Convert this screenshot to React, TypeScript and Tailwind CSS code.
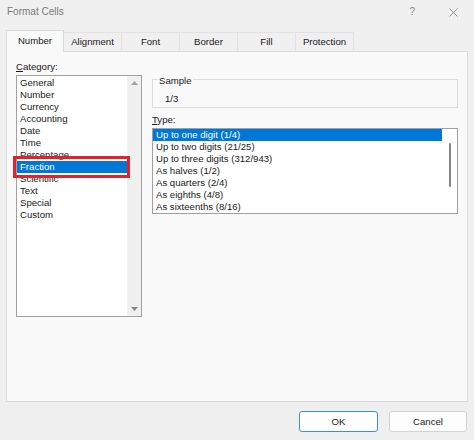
import React from "react";

const categories = [
  "General",
  "Number",
  "Currency",
  "Accounting",
  "Date",
  "Time",
  "Percentage",
  "Fraction",
  "Scientific",
  "Text",
  "Special",
  "Custom",
];

const types = [
  "Up to one digit (1/4)",
  "Up to two digits (21/25)",
  "Up to three digits (312/943)",
  "As halves (1/2)",
  "As quarters (2/4)",
  "As eighths (4/8)",
  "As sixteenths (8/16)",
];

const tabs = ["Number", "Alignment", "Font", "Border", "Fill", "Protection"];

export default function App() {
  return (
    <div
      className="w-[474px] h-[440px] bg-[#f0f0f0] flex flex-col text-[9.6px] leading-[12px] text-[#1a1a1a] overflow-hidden"
      style={{ fontFamily: '"Liberation Sans", Arial, sans-serif' }}
    >
      {/* Title bar */}
      <div className="h-[24px] flex items-center pl-[7px] pr-[16px]">
        <span className="text-[10px] text-[#7a7a7a]">Format Cells</span>
        <span className="ml-auto text-[10px] text-[#8a8a8a] mr-[34px]">?</span>
        <svg width="9" height="9" viewBox="0 0 9 9" className="mt-[1px]">
          <path d="M0.5 0.5 L8.5 8.5 M8.5 0.5 L0.5 8.5" stroke="#8a8a8a" strokeWidth="0.9" fill="none" />
        </svg>
      </div>

      {/* Tabs */}
      <div className="h-[27px] flex items-end px-[6px]">
        {tabs.map((t, i) =>
          i === 0 ? (
            <div
              key={t}
              className="relative z-10 -mb-px w-[58px] h-[22px] flex items-center justify-center bg-[#f9f9f9] border border-b-0 border-[#dadada] pb-[1px]"
            >
              {t}
            </div>
          ) : (
            <div
              key={t}
              className="w-[58px] h-[19px] flex items-center justify-center bg-[#f0f0f0] border-t border-r border-[#e2e2e2] text-[#1a1a1a]"
            >
              {t}
            </div>
          )
        )}
      </div>

      {/* Panel */}
      <div className="mx-[6px] h-[351px] bg-[#f9f9f9] border border-[#dadada] flex gap-[10px] pl-[9px] pt-[7px]">
        {/* Left column */}
        <div className="w-[126px] flex flex-col">
          <div className="h-[16px] flex items-center">
            <span>
              <span className="underline">C</span>ategory:
            </span>
          </div>
          <div className="relative h-[242px] bg-white border border-[#a0a0a0] flex">
            <div className="flex-1 flex flex-col pt-[1px]">
              {categories.map((c) =>
                c === "Fraction" ? (
                  <div key={c} className="h-[12px] pl-[3px] bg-[#0078d7] text-white flex items-center">
                    {c}
                  </div>
                ) : (
                  <div key={c} className="h-[12px] pl-[3px] flex items-center">
                    {c}
                  </div>
                )
              )}
            </div>
            <div className="w-[14px] bg-[#f0f0f0] flex flex-col items-center justify-between py-[5px]">
              <svg width="7" height="4" viewBox="0 0 7 4">
                <path d="M0 4 L3.5 0 L7 4 Z" fill="#a3a3a3" />
              </svg>
              <svg width="7" height="4" viewBox="0 0 7 4">
                <path d="M0 0 L7 0 L3.5 4 Z" fill="#8a8a8a" />
              </svg>
            </div>
            {/* Red highlight box */}
            <div className="absolute left-[-4px] top-[80px] w-[117px] h-[22px] border-[3px] border-[#e3202b]" />
          </div>
        </div>

        {/* Right column */}
        <div className="w-[306px] flex flex-col">
          <div className="relative mt-[20px] h-[29px] border border-[#dcdcdc]">
            <span className="absolute left-[5px] top-[-4px] bg-[#f9f9f9] px-[1px] leading-[10px]">Sample</span>
            <div className="pl-[12px] pt-[13px]">1/3</div>
          </div>
          <div className="h-[20px] flex items-end pb-[2px]">
            <span>
              <span className="underline">T</span>ype:
            </span>
          </div>
          <div className="h-[86px] bg-white border border-[#a0a0a0] flex">
            <div className="flex-1 flex flex-col">
              {types.map((t, i) =>
                i === 0 ? (
                  <div key={t} className="h-[12px] pl-[3px] bg-[#0078d7] text-white flex items-center">
                    {t}
                  </div>
                ) : (
                  <div key={t} className="h-[12px] pl-[3px] flex items-center">
                    {t}
                  </div>
                )
              )}
            </div>
            <div className="w-[15px] flex justify-center pt-[14px]">
              <div className="w-[2px] h-[44px] bg-[#858585] rounded-full ml-[1px]" />
            </div>
          </div>
        </div>
      </div>

      {/* Bottom bar */}
      <div className="flex-1 bg-[#efefef] flex items-center justify-end pr-[7px] gap-[11px] pt-[1px]">
        <button className="w-[79px] h-[21px] bg-[#fdfdfd] border border-[#3d8ee0] rounded-[3px] text-[9.6px] text-[#1a1a1a]">
          OK
        </button>
        <button className="w-[78px] h-[21px] bg-[#fdfdfd] border border-[#d2d2d2] rounded-[3px] text-[9.6px] text-[#1a1a1a]">
          Cancel
        </button>
      </div>
    </div>
  );
}
